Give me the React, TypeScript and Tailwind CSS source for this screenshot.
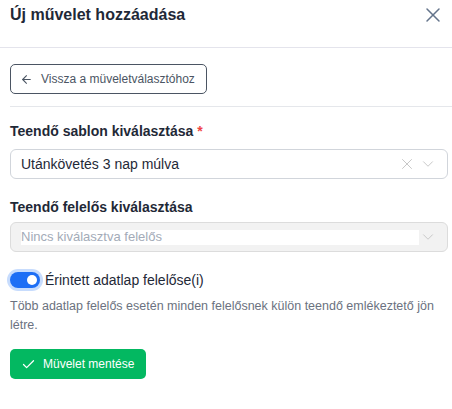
import { useState } from 'react';
import { ArrowLeft, Check, ChevronDown, X } from 'lucide-react';

const font = { fontFamily: '"Liberation Sans", Arial, sans-serif' };

const App = () => {
  const [forOwners, setForOwners] = useState(true);

  return (
    <div className="w-[452px] h-[409px] bg-white text-[#1f2937]" style={font}>
      {/* Header */}
      <div className="h-[48px] border-b border-[#e4e4ec] flex items-start justify-between pl-[10px] pr-[7px] pt-[3px]">
        <h2 className="text-[16px] leading-[24px] font-bold text-[#1f2937]">Új művelet hozzáadása</h2>
        <button className="h-[24px] flex items-center text-[#64748b]">
          <X className="h-[24px] w-[24px]" strokeWidth={1.5} />
        </button>
      </div>

      <div className="pl-[10px] pr-[4px]">
        <div className="pt-[16px] pb-[12px] pr-[6px]">
          <button className="h-[30px] pl-[9px] pr-[11px] flex items-center gap-[8px] rounded-[5px] border border-[#4b5563] text-[12px] text-[#4b5563]">
            <ArrowLeft className="h-[13px] w-[13px]" strokeWidth={2} />
            Vissza a müveletválasztóhoz
          </button>
        </div>
        <div className="border-t border-[#e5e7eb] -mr-[4px]" />

        {/* Template */}
        <div className="pt-[14px]">
          <label className="block text-[14px] leading-[20px] font-bold mb-[8px]">
            Teendő sablon kiválasztása <span className="text-[#ef4444]">*</span>
          </label>
          <div className="h-[30px] rounded-[6px] border border-[#d1d5db] flex items-center pl-[10px] pr-[10px]">
            <span className="flex-1 text-[14px] text-[#1f2937]">Utánkövetés 3 nap múlva</span>
            <X className="h-[18px] w-[18px] text-[#c4c4c4] mr-[3px]" strokeWidth={1.25} />
            <ChevronDown className="h-[18px] w-[18px] text-[#c4c4c4]" strokeWidth={1.25} />
          </div>
        </div>

        {/* Owner */}
        <div className="pt-[18px]">
          <label className="block text-[14px] leading-[20px] font-bold mb-[5px]">Teendő felelős kiválasztása</label>
          <div className="h-[30px] rounded-[6px] border border-[#dcdcdc] bg-[#f2f2f2] flex items-center pl-[10px] pr-[10px]">
            <span className="w-[398px] h-[15px] bg-white flex items-center text-[13px] text-[#a3abb8]">Nincs kiválasztva felelős</span>
            <span className="flex-1" />
            <ChevronDown className="h-[18px] w-[18px] text-[#c4c4c4]" strokeWidth={1.25} />
          </div>
        </div>

        {/* Toggle */}
        <div className="pt-[18px] flex items-center gap-[4px]">
          <button
            onClick={() => setForOwners(!forOwners)}
            className={`w-[30px] h-[16px] rounded-full ring-[3px] ring-[#c7dcfd] flex items-center px-[3px] ${forOwners ? 'bg-[#1d6ef5] justify-end' : 'bg-[#d1d5db] justify-start'}`}
          >
            <span className="h-[10px] w-[10px] rounded-full bg-white" />
          </button>
          <span className="text-[14px] leading-[20px] text-[#1f2937] ml-[1px]">Érintett adatlap felelőse(i)</span>
        </div>
        <p className="mt-[7px] text-[12.5px] leading-[19px] text-[#6b7280]">
          Több adatlap felelős esetén minden felelősnek külön teendő emlékeztető jön létre.
        </p>

        <button className="mt-[14px] h-[30px] pl-[11px] pr-[12px] flex items-center gap-[7px] rounded-[5px] bg-[#03b861] text-white text-[12px]">
          <Check className="h-[15px] w-[15px]" strokeWidth={2} />
          Müvelet mentése
        </button>
      </div>
    </div>
  );
};

export default App;
